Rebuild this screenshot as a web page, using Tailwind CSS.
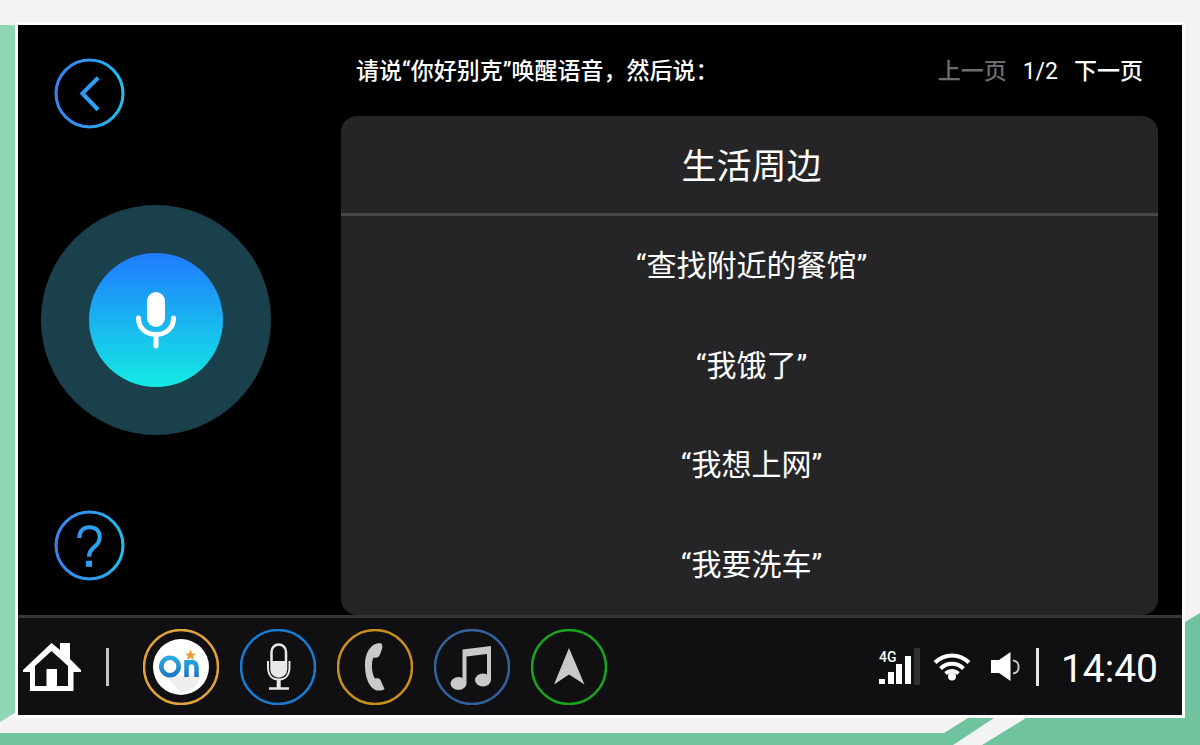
<!DOCTYPE html>
<html lang="zh-CN">
<head>
<meta charset="utf-8">
<meta name="viewport" content="width=device-width, initial-scale=1">
<title>语音助手</title>
<script src="https://cdn.jsdelivr.net/npm/@tailwindcss/browser@4"></script>
</head>
<body class="relative flex min-h-screen flex-col bg-[#f3f3f3] px-[15px] pt-[22px] pb-[27px] font-['Roboto','Noto_Sans_CJK_SC',sans-serif] text-white">
<svg class="absolute inset-0 h-full w-full" viewBox="0 0 1200 745" preserveAspectRatio="none" aria-hidden="true">
  <path fill="#90d5b5" d="M0 25H18V711L0 722Z"/>
  <path fill="#6fc39e" d="M0 733H944L968 718H994L953 745H0ZM1026 718L982 745H1200V613L1180 625V718Z"/>
</svg>

<div class="relative flex flex-1 flex-col border-[3px] border-white bg-black">
  <main class="flex flex-1">
    <aside class="flex w-[323px] shrink-0 flex-col justify-between pt-[33px] pb-[34px]">
      <button type="button" aria-label="返回" class="ml-9 size-[71px]">
        <svg viewBox="0 0 70 70" fill="none" stroke="url(#ring)" stroke-width="3">
          <defs><linearGradient id="ring" gradientUnits="userSpaceOnUse" x1="0" y1="0" x2="70" y2="0"><stop offset="0" stop-color="#3b7ff0"/><stop offset=".5" stop-color="#2f9df0"/><stop offset="1" stop-color="#22bdec"/></linearGradient></defs>
          <circle cx="35" cy="35" r="33"/>
          <path d="M43.500 19.500L28 35L43.500 51" stroke-width="4"/>
        </svg>
      </button>
      <button type="button" aria-label="语音输入" class="ml-[23px] flex size-[230px] items-center justify-center rounded-full bg-[#1a404c]">
        <span class="flex size-[134px] items-center justify-center rounded-full bg-linear-to-b/srgb from-[#1f7bff] to-[#14ebe2]">
          <svg class="h-[58px] w-[42px]" viewBox="0 0 42 58" fill="none" stroke="#fff" stroke-linecap="round">
            <rect x="12" y="1" width="18" height="35" rx="9" fill="#fff" stroke="none"/>
            <path d="M3.500 27C3.500 37 11 43.500 21 43.500S38.500 37 38.500 27M21 44V55" stroke-width="5"/>
          </svg>
        </span>
      </button>
      <button type="button" aria-label="帮助" class="ml-9 size-[71px]">
        <svg viewBox="0 0 70 70" fill="none" stroke="url(#ring)">
          <circle cx="35" cy="35" r="33" stroke-width="3"/>
          <path d="M25 27.500C25 20.500 29 17 35 17C41.500 17 45 21 45 26.500C45 32 42 34.500 38.500 37.500C35.500 40.500 34.500 42 34.500 46" stroke-width="4"/>
          <path d="M31.500 53H37.500" stroke-width="6"/>
        </svg>
      </button>
    </aside>

    <section class="flex min-w-0 flex-1 flex-col pr-6">
      <header class="flex h-[91px] items-center justify-between px-[15px] pt-0.5 text-[23px] leading-8 font-medium">
        <p>请说“你好别克”唤醒语音，然后说：</p>
        <nav class="flex items-center gap-4" aria-label="分页">
          <button type="button" disabled class="text-[#6c6c6c]">上一页</button>
          <span class="font-normal">1/2</span>
          <button type="button">下一页</button>
        </nav>
      </header>
      <div class="flex flex-1 flex-col overflow-hidden rounded-2xl bg-[#252527]">
        <h1 class="flex h-[100px] items-center justify-center border-b-[3px] border-[#48484a] pt-1.5 pl-1 text-[35px] leading-12">生活周边</h1>
        <ul class="flex flex-1 flex-col pl-1 text-center text-[30px] leading-10">
          <li class="flex flex-1 items-center justify-center">“查找附近的餐馆”</li>
          <li class="flex flex-1 items-center justify-center">“我饿了”</li>
          <li class="flex flex-1 items-center justify-center">“我想上网”</li>
          <li class="flex flex-1 items-center justify-center">“我要洗车”</li>
        </ul>
      </div>
    </section>
  </main>

  <footer class="flex h-[100px] items-center justify-between border-t-[3px] border-[#363638] bg-[#101012] pr-6 pl-[5px]">
    <div class="flex items-center">
      <button type="button" aria-label="主页">
        <svg class="h-[50px] w-[58px]" viewBox="0 0 58 50" fill="#fff">
          <path d="M28.500 1L37 8V1H47V17L58 28V30H50.500V49H7V30H0V28ZM28.500 9L12 24V44H23.500V27H34V44H45V24Z" fill-rule="evenodd"/>
        </svg>
      </button>
      <span class="ml-[25px] h-[38px] w-[3px] bg-[#c4c4c4]"></span>
      <nav class="ml-[34px] flex gap-[21px]" aria-label="应用">
        <button type="button" aria-label="安吉星" class="size-[76px]">
          <svg viewBox="0 0 76 76">
            <defs><linearGradient id="on" gradientUnits="userSpaceOnUse" x1="0" y1="27" x2="0" y2="49"><stop offset="0" stop-color="#2bb0e2"/><stop offset="1" stop-color="#1a72bd"/></linearGradient></defs>
            <circle cx="38" cy="38" r="37" fill="none" stroke="#e2a33a" stroke-width="2.500"/>
            <circle cx="38" cy="38" r="28" fill="#fff"/>
            <path d="M22 46L38 64C50 62 55 56 57 48Z" fill="#efefef"/>
            <ellipse cx="27" cy="37.500" rx="8.700" ry="8.700" fill="none" stroke="url(#on)" stroke-width="4.500"/>
            <path d="M43.500 48V31M43.500 38C43.500 34.500 45.500 33 48.500 33C52 33 53.500 35 53.500 38.500V48" fill="none" stroke="url(#on)" stroke-width="4.500"/>
            <path d="M47.500 20.500L49 24.500H53L50 27L51 31L47.500 28.500L44 31L45 27L42 24.500H46Z" fill="#ee9a32"/>
          </svg>
        </button>
        <button type="button" aria-label="语音" class="size-[76px]">
          <svg viewBox="0 0 76 76" fill="none">
            <circle cx="38" cy="38" r="37" stroke="#197bd2" stroke-width="2.500"/>
            <rect x="31.500" y="15.500" width="14.500" height="32" rx="7.250" stroke="#e8e8e8" stroke-width="2.500"/>
            <path d="M32 32H45.500V40C45.500 44.500 42.500 47 38.700 47S32 44.500 32 40Z" fill="#e8e8e8"/>
            <path d="M28 32V38C28 46 32 50.500 38.700 50.500S49.500 46 49.500 38V32" stroke="#e8e8e8" stroke-width="2"/>
            <path d="M38.700 50V59" stroke="#e8e8e8" stroke-width="4"/><path d="M29 59.500H49" stroke="#e8e8e8" stroke-width="2.500"/>
          </svg>
        </button>
        <button type="button" aria-label="电话" class="size-[76px]">
          <svg viewBox="0 0 76 76">
            <circle cx="38" cy="38" r="37" fill="none" stroke="#c98f1c" stroke-width="2.500"/>
            <path d="M44.500 14.500C34 13 28 24 28 36C28 51 34 62 42 61.500C44.500 61.500 46.500 61 47.500 60L43.500 51C42.500 49 40.500 49 38 49.500C34.500 45 34 33 36.500 28.500C40 29.500 42 28 43 25.500L45 20C45.500 18 45.500 16 44.500 14.500Z" fill="#c9c9ca"/>
          </svg>
        </button>
        <button type="button" aria-label="音乐" class="size-[76px]">
          <svg viewBox="0 0 76 76">
            <circle cx="38" cy="38" r="37" fill="none" stroke="#34609b" stroke-width="2.500"/>
            <path d="M28.500 20.500L57 17V50H53V25L32.500 27.500V54H28.500Z" fill="#c9c9ca"/>
            <ellipse cx="24.500" cy="54.500" rx="8" ry="6.500" fill="#c9c9ca"/><ellipse cx="49" cy="51" rx="8" ry="6.500" fill="#c9c9ca"/>
          </svg>
        </button>
        <button type="button" aria-label="导航" class="size-[76px]">
          <svg viewBox="0 0 76 76">
            <circle cx="38" cy="38" r="37" fill="none" stroke="#18a51d" stroke-width="2.500"/>
            <path d="M38 19L53.500 55.500L38 45.500L23 55.500Z" fill="#c9c9ca"/>
          </svg>
        </button>
      </nav>
    </div>
    <div class="flex items-center">
      <svg class="h-[38px] w-[43px]" viewBox="0 0 43 38" role="img" aria-label="4G 信号" fill="#fff">
        <text x="1" y="14" font-size="14" font-weight="500">4G</text>
        <path d="M1 31H7V36H1ZM10 24H16V36H10ZM18 16H24V36H18ZM27 8H33V36H27Z"/>
        <path d="M36 0H42V37H36Z" fill="#303032"/>
      </svg>
      <svg class="ml-3 h-[38px] w-[38px]" viewBox="0 0 38 38" role="img" aria-label="Wi-Fi" fill="none" stroke="#fff" stroke-width="4">
        <path d="M2 14.500C11.500 5 26.500 5 36 14.500M7.500 20.500C14 14 24 14 30.500 20.500M12.500 25.500C16.500 22 21.500 22 25.500 25.500"/>
        <circle cx="19" cy="28.500" r="4" fill="#fff" stroke="none"/>
      </svg>
      <svg class="ml-5 h-[38px] w-[30px]" viewBox="0 0 30 38" role="img" aria-label="音量">
        <path d="M0 12H8L19.500 4V33L8 25H0Z" fill="#fff"/>
        <path d="M22 12.500C29.500 13 29.500 25 22 25.500" fill="none" stroke="#c9c9ca" stroke-width="2"/>
      </svg>
      <span class="ml-[15px] h-[38px] w-[3px] bg-[#e4e4e4]"></span>
      <time class="ml-[22px] pt-1 text-[39px] leading-12">14:40</time>
    </div>
  </footer>
</div>
</body>
</html>
